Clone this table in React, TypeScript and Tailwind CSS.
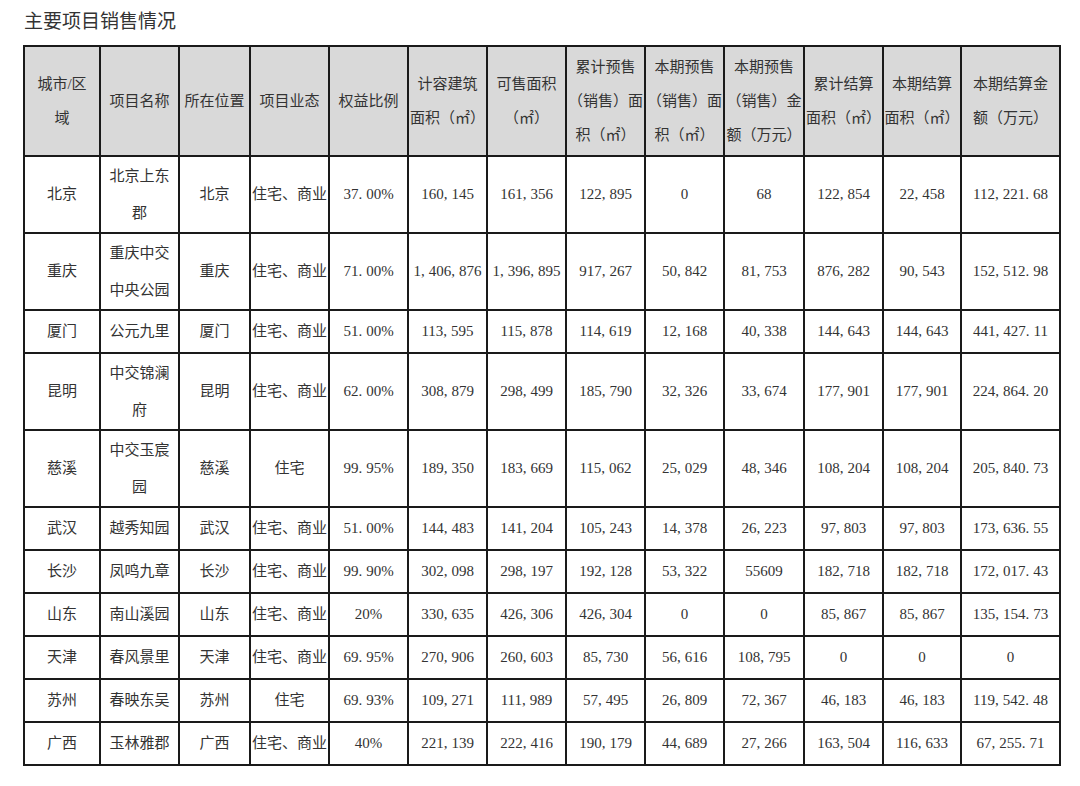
import React from "react";

const headers: string[][] = [
  ["城市/区", "域"],
  ["项目名称"],
  ["所在位置"],
  ["项目业态"],
  ["权益比例"],
  ["计容建筑", "面积（㎡）"],
  ["可售面积", "（㎡）"],
  ["累计预售", "（销售）面", "积（㎡）"],
  ["本期预售", "（销售）面", "积（㎡）"],
  ["本期预售", "（销售）金", "额（万元）"],
  ["累计结算", "面积（㎡）"],
  ["本期结算", "面积（㎡）"],
  ["本期结算金", "额（万元）"],
];

const widths = [76, 79, 71, 79, 79, 79, 79, 79, 79, 80, 79, 78, 99];

type Row = { tall: boolean; cells: string[] };

const rows: Row[] = [
  { tall: true, cells: ["北京", "北京上东|郡", "北京", "住宅、商业", "37.00%", "160,145", "161,356", "122,895", "0", "68", "122,854", "22,458", "112,221.68"] },
  { tall: true, cells: ["重庆", "重庆中交|中央公园", "重庆", "住宅、商业", "71.00%", "1,406,876", "1,396,895", "917,267", "50,842", "81,753", "876,282", "90,543", "152,512.98"] },
  { tall: false, cells: ["厦门", "公元九里", "厦门", "住宅、商业", "51.00%", "113,595", "115,878", "114,619", "12,168", "40,338", "144,643", "144,643", "441,427.11"] },
  { tall: true, cells: ["昆明", "中交锦澜|府", "昆明", "住宅、商业", "62.00%", "308,879", "298,499", "185,790", "32,326", "33,674", "177,901", "177,901", "224,864.20"] },
  { tall: true, cells: ["慈溪", "中交玉宸|园", "慈溪", "住宅", "99.95%", "189,350", "183,669", "115,062", "25,029", "48,346", "108,204", "108,204", "205,840.73"] },
  { tall: false, cells: ["武汉", "越秀知园", "武汉", "住宅、商业", "51.00%", "144,483", "141,204", "105,243", "14,378", "26,223", "97,803", "97,803", "173,636.55"] },
  { tall: false, cells: ["长沙", "凤鸣九章", "长沙", "住宅、商业", "99.90%", "302,098", "298,197", "192,128", "53,322", "55609", "182,718", "182,718", "172,017.43"] },
  { tall: false, cells: ["山东", "南山溪园", "山东", "住宅、商业", "20%", "330,635", "426,306", "426,304", "0", "0", "85,867", "85,867", "135,154.73"] },
  { tall: false, cells: ["天津", "春风景里", "天津", "住宅、商业", "69.95%", "270,906", "260,603", "85,730", "56,616", "108,795", "0", "0", "0"] },
  { tall: false, cells: ["苏州", "春映东吴", "苏州", "住宅", "69.93%", "109,271", "111,989", "57,495", "26,809", "72,367", "46,183", "46,183", "119,542.48"] },
  { tall: false, cells: ["广西", "玉林雅郡", "广西", "住宅、商业", "40%", "221,139", "222,416", "190,179", "44,689", "27,266", "163,504", "116,633", "67,255.71"] },
];

// commas and points are half-width in the source font, so pad them out
function Num({ v }: { v: string }) {
  const parts = v.split(/([,.])/);
  return (
    <>
      {parts.map((p, i) =>
        p === "," || p === "." ? (
          <span key={i} className="mr-[4px]">{p}</span>
        ) : (
          <React.Fragment key={i}>{p}</React.Fragment>
        )
      )}
    </>
  );
}

export default function App() {
  return (
    <div className="bg-white min-h-[786px] pl-[23px] pt-[10px] text-[#333] font-['Liberation_Serif','Noto_Sans_CJK_SC',serif]">
      <h1 className="h-[24px] pl-[1px] text-[19px] leading-[24px] font-normal mb-[11px]">主要项目销售情况</h1>
      <table className="table-fixed border-collapse w-[1036px] text-[15px]">
        <colgroup>
          {widths.map((w, i) => (
            <col key={i} style={{ width: w }} />
          ))}
        </colgroup>
        <thead>
          <tr className="h-[110px] bg-[#d9d9d9]">
            {headers.map((lines, i) => (
              <th key={i} className="border-2 border-[#1a1a1a] p-0 font-normal text-center align-middle whitespace-nowrap leading-[34px]">
                {lines.map((l, j) => (
                  <div key={j}>{l}</div>
                ))}
              </th>
            ))}
          </tr>
        </thead>
        <tbody>
          {rows.map((r, ri) => (
            <tr key={ri} className={r.tall ? "h-[77px]" : "h-[43px]"}>
              {r.cells.map((c, ci) => (
                <td key={ci} className="border-2 border-[#1a1a1a] p-0 text-center align-middle whitespace-nowrap leading-[37px]">
                  {c.split("|").map((l, j) => (
                    <div key={j}>
                      <Num v={l} />
                    </div>
                  ))}
                </td>
              ))}
            </tr>
          ))}
        </tbody>
      </table>
    </div>
  );
}
